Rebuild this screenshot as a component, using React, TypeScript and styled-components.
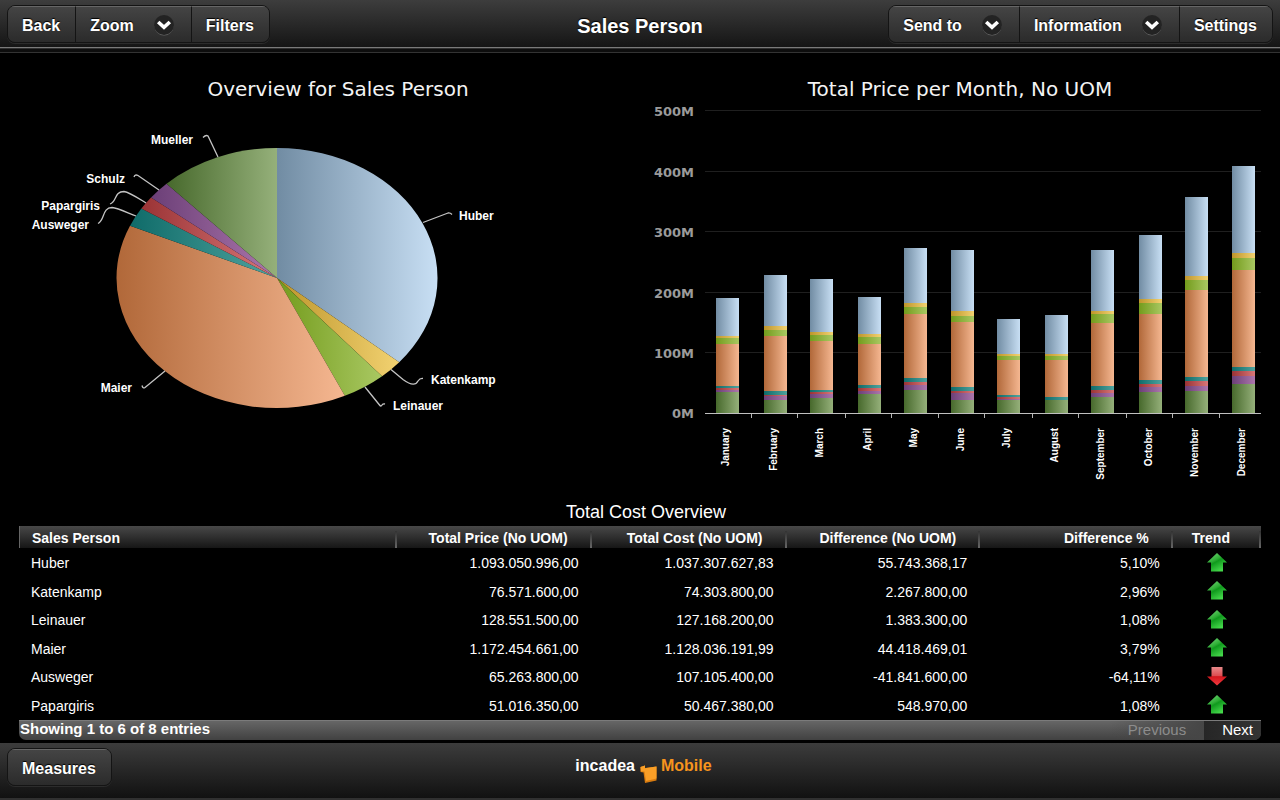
import React from "react";
import styled, { createGlobalStyle } from "styled-components";

const SANS = `"Liberation Sans", Arial, Helvetica, sans-serif`;
const CHART = `"DejaVu Sans", Verdana, sans-serif`;

const GlobalStyle = createGlobalStyle`
  *, *::before, *::after { box-sizing: border-box; }
  body {
    margin: 0;
    background: #000;
    color: #fff;
    font-family: ${SANS};
  }
`;

const Page = styled.div`
  display: flex;
  flex-direction: column;
  min-height: 100vh;
`;

const Toolbar = styled.header`
  display: grid;
  grid-template-columns: 1fr auto 1fr;
  align-items: start;
  height: 53px;
  padding: 5px 7px 0;
  background:
    linear-gradient(#7a7a7a, #7a7a7a) 0 47px / 100% 1px no-repeat,
    linear-gradient(#303030, #303030) 0 48px / 100% 1px no-repeat,
    linear-gradient(#333, #333) 0 52px / 100% 1px no-repeat,
    linear-gradient(#3d3d3d, #151515 47px, #0d0d0d 48px);
`;

const PageTitle = styled.h1`
  margin: 0;
  font-size: 20px;
  line-height: 42px;
  font-weight: 700;
  text-shadow: 0 -1px 1px #000;
`;

const ButtonGroup = styled.div<{ $end?: boolean }>`
  display: flex;
  justify-self: ${(p) => (p.$end ? "end" : "start")};
  height: 38px;
  border: 1px solid #141414;
  border-radius: 8px;
  overflow: hidden;
  box-shadow: 0 1px 0 #2c2c2c;
`;

const BarButton = styled.button`
  display: flex;
  align-items: center;
  gap: 20px;
  padding: 3px 15px 0 14px;
  border: 0;
  border-top: 1px solid #666;
  background: linear-gradient(#444, #2b2b2b);
  color: #fff;
  font: 700 16px/20px ${SANS};
  text-shadow: 0 -1px 1px #000;
  cursor: pointer;

  & + & {
    border-left: 1px solid #141414;
  }

  svg {
    display: block;
    margin: -2px 2px 0 0;
  }
`;

const Charts = styled.section`
  display: grid;
  grid-template-columns: 1fr 1fr;
  padding-top: 24px;
`;

const ChartPanel = styled.figure`
  margin: 0;
  min-width: 0;

  svg {
    display: block;
    width: 100%;
    height: auto;
  }
`;

const ChartTitle = styled.figcaption<{ $shift?: boolean }>`
  padding-left: ${(p) => (p.$shift ? "36px" : "0")};
  font: 400 20px/24px ${CHART};
  text-align: center;
  color: #f4f4f4;
`;

const TableSection = styled.section`
  flex: 1;
  padding: 9px 19px 3px;
`;

const TableTitle = styled.h2`
  margin: 0;
  padding: 0 0 2px 12px;
  font-size: 18px;
  line-height: 24px;
  font-weight: 400;
  text-align: center;
`;

const DataTable = styled.table`
  width: 100%;
  table-layout: fixed;
  border-collapse: collapse;
  font-size: 14px;
  line-height: 16px;

  thead tr {
    height: 22px;
    background:
      linear-gradient(#666, #666) left / 1px 100% no-repeat,
      linear-gradient(#484848, #161616);
  }

  tbody tr {
    height: 28px;
  }

  tbody tr:nth-child(even) {
    height: 29px;
  }
`;

type Align = "left" | "right" | "center";

const HeadCell = styled.th<{ $align: Align; $width: string }>`
  width: ${(p) => p.$width};
  padding: 2px ${(p) => (p.$align === "center" ? "12px" : "24px")} 0
    ${(p) => (p.$align === "left" ? "13px" : "0")};
  font-weight: 700;
  font-size: 14px;
  text-align: ${(p) => p.$align};
  white-space: nowrap;
  background: linear-gradient(#333, #666) right bottom / 2px 17px no-repeat;
`;

const Cell = styled.td<{ $align: Align }>`
  padding: ${(p) => (p.$align === "center" ? "0" : "2px")}
    ${(p) => (p.$align === "right" ? "13px" : "0")} 0
    ${(p) => (p.$align === "left" ? "12px" : "0")};
  text-align: ${(p) => p.$align};

  svg {
    display: block;
    margin: 0 auto;
  }
`;

const TableFooter = styled.div`
  display: flex;
  justify-content: space-between;
  height: 20px;
  margin-top: 1px;
  border-top: 1px solid #7b7b7b;
  border-radius: 0 0 7px 7px;
  background: linear-gradient(#666, #414141);
  font-size: 15px;
  line-height: 15px;
  overflow: hidden;
`;

const EntryCount = styled.span`
  padding-left: 1px;
  font-weight: 700;
`;

const Pager = styled.nav`
  display: flex;
`;

const PagerButton = styled.button`
  padding: 0 8px 2px 18px;
  border: 0;
  background: linear-gradient(90deg, #262626, #333);
  color: #fff;
  font: 400 15px/17px ${SANS};
  cursor: pointer;

  &:disabled {
    padding-right: 18px;
    background: linear-gradient(90deg, transparent, #464646);
    color: #8c8c8c;
    cursor: default;
  }
`;

const BottomBar = styled.footer`
  display: grid;
  grid-template-columns: 1fr auto 1fr;
  align-items: start;
  height: 57px;
  padding: 5px 7px 0;
  border-bottom: 2px solid #303030;
  background: linear-gradient(#3c3c3c, #111);
`;

const Brand = styled.div`
  display: flex;
  padding-left: 7px;
  font-size: 16px;
  line-height: 36px;
  font-weight: 700;

  svg {
    margin: 17px 4px 0 5px;
  }
`;

const BrandAccent = styled.span`
  color: #f7941d;
`;

const BASELINE = 413;
const BAR_WIDTH = 23;

interface Series {
  id: string;
  from: string;
  to: string;
}

const BLUE: Series = { id: "huber", from: "#718ca3", to: "#c8dff4" };
const YELLOW: Series = { id: "katenkamp", from: "#bd952b", to: "#f2d271" };
const LIME: Series = { id: "leinauer", from: "#739b1c", to: "#a9c862" };
const ORANGE: Series = { id: "maier", from: "#b16839", to: "#f5b791" };
const TEAL: Series = { id: "ausweger", from: "#0f6b69", to: "#4fa39e" };
const RED: Series = { id: "papargiris", from: "#9a3335", to: "#d97778" };
const PURPLE: Series = { id: "schulz", from: "#6b3f77", to: "#ac76ac" };
const GREEN: Series = { id: "mueller", from: "#47692c", to: "#95b07a" };

const SERIES = [BLUE, YELLOW, LIME, ORANGE, TEAL, RED, PURPLE, GREEN];

const Gradients = ({ prefix }: { prefix: string }) => (
  <defs>
    {SERIES.map((s) => (
      <linearGradient key={s.id} id={`${prefix}-${s.id}`} x1="0" x2="1" y1="0" y2="0">
        <stop offset="0" stopColor={s.from} />
        <stop offset="1" stopColor={s.to} />
      </linearGradient>
    ))}
  </defs>
);

/* Slice ends, in degrees clockwise from twelve o'clock */
const SLICES: { series: Series; end: number }[] = [
  { series: BLUE, end: 130.4 },
  { series: YELLOW, end: 139.1 },
  { series: LIME, end: 155 },
  { series: ORANGE, end: 293.7 },
  { series: TEAL, end: 302.3 },
  { series: RED, end: 308.3 },
  { series: PURPLE, end: 316.5 },
  { series: GREEN, end: 360 },
];

const PIE = { cx: 277, cy: 278, rx: 160.5, ry: 130 };

const pointAt = (deg: number) => {
  const t = (deg * Math.PI) / 180;
  const x = PIE.cx + PIE.rx * Math.sin(t);
  const y = PIE.cy - PIE.ry * Math.cos(t);
  return `${x.toFixed(2)} ${y.toFixed(2)}`;
};

const CALLOUTS: { text: string; x: number; y: number; end?: boolean; line: string }[] = [
  { text: "Mueller", x: 193, y: 144, end: true, line: "M203 137.5Q206 134.500 208 136L218 157" },
  { text: "Schulz", x: 125, y: 183, end: true, line: "M134 177Q135 174 138 175.500L159 190" },
  { text: "Papargiris", x: 100, y: 210, end: true, line: "M110 204C117 202 114 191.500 124 191.500C129 192 138 198 146 203" },
  { text: "Ausweger", x: 89, y: 229, end: true, line: "M98 223.500C105 220 102 207.500 112 207.500C118 208 128 213 136 216" },
  { text: "Maier", x: 132, y: 392, end: true, line: "M142 385.500Q143 389 145 387.500L165 371" },
  { text: "Huber", x: 459, y: 220, line: "M423 222.500L448 213Q450 212.500 452 214.500" },
  { text: "Katenkamp", x: 431, y: 384, line: "M391 369.500L403 379.500C412 386 416 385 418 381Q420 378 423 378.500" },
  { text: "Leinauer", x: 393, y: 410, line: "M365 387L379.500 405Q381 407 382 405Q383 403.500 385 404" },
];

const PieChart = () => (
  <svg viewBox="0 101 640 390" role="img" aria-label="Overview for Sales Person">
    <Gradients prefix="pie" />
    {SLICES.map(({ series, end }, i) => {
      const start = i === 0 ? 0 : SLICES[i - 1].end;
      return (
        <path
          key={series.id}
          d={`M${PIE.cx} ${PIE.cy}L${pointAt(start)}A${PIE.rx} ${PIE.ry} 0 0 1 ${pointAt(end)}Z`}
          fill={`url(#pie-${series.id})`}
        />
      );
    })}
    {CALLOUTS.map((c) => (
      <g key={c.text}>
        <path d={c.line} fill="none" stroke="#c4c4c4" strokeWidth="1.3" />
        <text
          x={c.x}
          y={c.y}
          fill="#fff"
          fontFamily={SANS}
          fontSize="12"
          fontWeight="700"
          textAnchor={c.end ? "end" : "start"}
        >
          {c.text}
        </text>
      </g>
    ))}
  </svg>
);

/* Top edge of each stacked segment, in the order of SERIES */
const MONTHS: { name: string; x: number; tops: number[] }[] = [
  { name: "January", x: 716, tops: [298, 336, 338, 344, 386, 388, 390, 392] },
  { name: "February", x: 764, tops: [275, 326, 330, 336, 391, 395, 396, 400] },
  { name: "March", x: 810, tops: [279, 332, 335, 341, 390, 392, 394, 398] },
  { name: "April", x: 858, tops: [297, 334, 337, 344, 385, 388, 391, 394] },
  { name: "May", x: 904, tops: [248, 303, 307, 314, 378, 382, 385, 390] },
  { name: "June", x: 951, tops: [250, 311, 316, 322, 387, 391, 393, 400] },
  { name: "July", x: 997, tops: [319, 354, 356, 360, 395, 397, 399, 400] },
  { name: "August", x: 1045, tops: [315, 354, 356, 360, 397, 400, 400, 400] },
  { name: "September", x: 1091, tops: [250, 311, 314, 323, 386, 390, 393, 397] },
  { name: "October", x: 1139, tops: [235, 299, 303, 314, 380, 384, 387, 392] },
  { name: "November", x: 1185, tops: [197, 276, 280, 290, 377, 381, 386, 391] },
  { name: "December", x: 1232, tops: [166, 253, 258, 270, 367, 371, 376, 384] },
];

const AXIS = [
  { label: "500M", y: 111 },
  { label: "400M", y: 172 },
  { label: "300M", y: 232 },
  { label: "200M", y: 293 },
  { label: "100M", y: 353 },
  { label: "0M", y: BASELINE },
];

const BarChart = () => (
  <svg viewBox="640 101 640 390" role="img" aria-label="Total Price per Month, No UOM">
    <Gradients prefix="bar" />
    {AXIS.map((a) => (
      <g key={a.label}>
        {a.y !== BASELINE && <rect x="705" y={a.y - 1} width="556" height="1" fill="#1f1f1f" />}
        <text
          x="694"
          y={a.y + 5}
          fill="#9b9b9b"
          fontFamily={CHART}
          fontSize="13"
          fontWeight="700"
          textAnchor="end"
        >
          {a.label}
        </text>
      </g>
    ))}
    {MONTHS.map((m, i) => (
      <g key={m.name}>
        {m.tops.map((top, s) => (
          <rect
            key={SERIES[s].id}
            x={m.x}
            y={top}
            width={BAR_WIDTH}
            height={(m.tops[s + 1] ?? BASELINE) - top}
            fill={`url(#bar-${SERIES[s].id})`}
          />
        ))}
        {i > 0 && <rect x={m.x - 13} y={BASELINE} width="1" height="5" fill="#b5b5b5" />}
        <text
          transform={`translate(${m.x + 13} 428) rotate(-90)`}
          fill="#fff"
          fontFamily={SANS}
          fontSize="10"
          fontWeight="700"
          textAnchor="end"
        >
          {m.name}
        </text>
      </g>
    ))}
    <rect x="705" y={BASELINE} width="556" height="1" fill="#c0c0c0" />
  </svg>
);

const DownIcon = () => (
  <svg width="20" height="21" viewBox="0 0 20 21" aria-hidden="true">
    <circle cx="10" cy="11" r="9.600" fill="#686868" />
    <circle cx="10" cy="10" r="10" fill="#232323" />
    <path d="M4.200 7L10 12.400L15.800 7" fill="none" stroke="#fff" strokeWidth="3.600" />
  </svg>
);

const TrendArrow = ({ up }: { up: boolean }) => (
  <svg width="20" height="19" viewBox="0 0 20 19" role="img" aria-label={up ? "Up" : "Down"}>
    <defs>
      <linearGradient id="trend-up" x1="0" x2="0.600" y1="0" y2="1">
        <stop offset="0" stopColor="#7ddb82" />
        <stop offset="0.450" stopColor="#2fae36" />
        <stop offset="0.550" stopColor="#109a1d" />
        <stop offset="1" stopColor="#45d84b" />
      </linearGradient>
      <linearGradient id="trend-down" x1="0" x2="0" y1="0" y2="1">
        <stop offset="0" stopColor="#e88a8a" />
        <stop offset="0.480" stopColor="#dd4c50" />
        <stop offset="0.520" stopColor="#d5161d" />
        <stop offset="1" stopColor="#ee3a40" />
      </linearGradient>
    </defs>
    {up ? (
      <path d="M10 0L20 9.500H16V18.500H4V9.500H0Z" fill="url(#trend-up)" />
    ) : (
      <path d="M4.500 0H15.500V9.500H20L10 18.500L0 9.500H4.500Z" fill="url(#trend-down)" />
    )}
  </svg>
);

const BrandMark = () => (
  <svg width="17" height="18" viewBox="0 0 17 18" aria-hidden="true">
    <path d="M0.500 2L5 0.500V3L16.500 1.500V15.500L5 18L3.500 7.500L0.500 7Z" fill="#d97c10" />
    <path d="M0.500 2L5 0.500V3.200L16.500 1.500V13.500L6 16L4.500 6.500L1 6.500Z" fill="#fa9f27" />
  </svg>
);

const COLUMNS: { label: string; align: Align; width: string }[] = [
  { label: "Sales Person", align: "left", width: "30.4%" },
  { label: "Total Price (No UOM)", align: "right", width: "15.7%" },
  { label: "Total Cost (No UOM)", align: "right", width: "15.7%" },
  { label: "Difference (No UOM)", align: "right", width: "15.6%" },
  { label: "Difference %", align: "right", width: "15.5%" },
  { label: "Trend", align: "center", width: "7.1%" },
];

const ROWS = [
  ["Huber", "1.093.050.996,00", "1.037.307.627,83", "55.743.368,17", "5,10%"],
  ["Katenkamp", "76.571.600,00", "74.303.800,00", "2.267.800,00", "2,96%"],
  ["Leinauer", "128.551.500,00", "127.168.200,00", "1.383.300,00", "1,08%"],
  ["Maier", "1.172.454.661,00", "1.128.036.191,99", "44.418.469,01", "3,79%"],
  ["Ausweger", "65.263.800,00", "107.105.400,00", "-41.841.600,00", "-64,11%"],
  ["Papargiris", "51.016.350,00", "50.467.380,00", "548.970,00", "1,08%"],
];

export default function App() {
  return (
    <Page>
      <GlobalStyle />
      <Toolbar>
        <ButtonGroup>
          <BarButton type="button">Back</BarButton>
          <BarButton type="button" aria-haspopup="menu">
            Zoom
            <DownIcon />
          </BarButton>
          <BarButton type="button">Filters</BarButton>
        </ButtonGroup>
        <PageTitle>Sales Person</PageTitle>
        <ButtonGroup $end>
          <BarButton type="button" aria-haspopup="menu">
            Send to
            <DownIcon />
          </BarButton>
          <BarButton type="button" aria-haspopup="menu">
            Information
            <DownIcon />
          </BarButton>
          <BarButton type="button">Settings</BarButton>
        </ButtonGroup>
      </Toolbar>

      <Charts>
        <ChartPanel>
          <ChartTitle $shift>Overview for Sales Person</ChartTitle>
          <PieChart />
        </ChartPanel>
        <ChartPanel>
          <ChartTitle>Total Price per Month, No UOM</ChartTitle>
          <BarChart />
        </ChartPanel>
      </Charts>

      <TableSection>
        <TableTitle id="cost-title">Total Cost Overview</TableTitle>
        <DataTable aria-labelledby="cost-title">
          <thead>
            <tr>
              {COLUMNS.map((c) => (
                <HeadCell key={c.label} scope="col" $align={c.align} $width={c.width}>
                  {c.label}
                </HeadCell>
              ))}
            </tr>
          </thead>
          <tbody>
            {ROWS.map((row) => (
              <tr key={row[0]}>
                {row.map((value, i) => (
                  <Cell key={COLUMNS[i].label} $align={COLUMNS[i].align}>
                    {value}
                  </Cell>
                ))}
                <Cell $align="center">
                  <TrendArrow up={!row[4].startsWith("-")} />
                </Cell>
              </tr>
            ))}
          </tbody>
        </DataTable>
        <TableFooter>
          <EntryCount>Showing 1 to 6 of 8 entries</EntryCount>
          <Pager aria-label="Table pages">
            <PagerButton type="button" disabled>
              Previous
            </PagerButton>
            <PagerButton type="button">Next</PagerButton>
          </Pager>
        </TableFooter>
      </TableSection>

      <BottomBar>
        <ButtonGroup>
          <BarButton type="button">Measures</BarButton>
        </ButtonGroup>
        <Brand>
          incadea
          <BrandMark />
          <BrandAccent>Mobile</BrandAccent>
        </Brand>
      </BottomBar>
    </Page>
  );
}
